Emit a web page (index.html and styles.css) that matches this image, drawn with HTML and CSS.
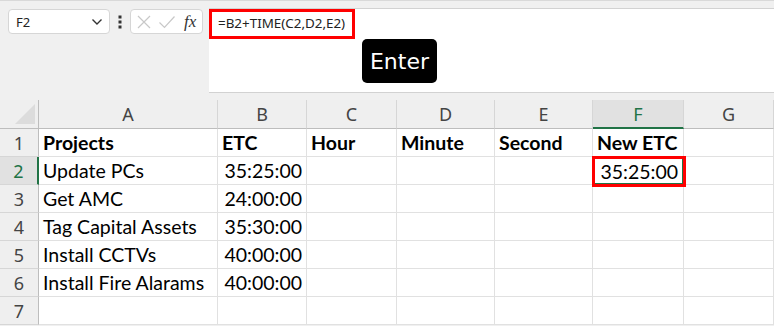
FILE: index.html
```html
<!DOCTYPE html>
<html lang="en">
<head>
    <meta charset="UTF-8">
    <meta name="viewport" content="width=device-width, initial-scale=1.0">
    <title>New ETC</title>
    <link rel="stylesheet" href="styles.css">
</head>
<body>
    <div class="topbar">
        <div class="namebox">
            <span>F2</span>
            <svg width="12" height="8" viewBox="0 0 12 8"><path d="M1.5 1.5 L6 6 L10.5 1.5" fill="none" stroke="#333" stroke-width="1.4"/></svg>
        </div>
        <div class="dots">
            <svg width="4" height="14" viewBox="0 0 4 14"><rect x="0.5" y="0.5" width="3" height="3" fill="#333"/><rect x="0.5" y="5.5" width="3" height="3" fill="#333"/><rect x="0.5" y="10.5" width="3" height="3" fill="#333"/></svg>
        </div>
        <div class="fnbox">
            <svg width="16" height="16" viewBox="0 0 16 16"><path d="M2 2 L14 14 M14 2 L2 14" stroke="#c8c8c8" stroke-width="1.2"/></svg>
            <svg width="18" height="16" viewBox="0 0 18 16"><path d="M1.5 8.5 L6.5 13.5 L16.5 2.5" fill="none" stroke="#c8c8c8" stroke-width="1.2"/></svg>
            <span class="fx">fx</span>
        </div>
        <div class="formula">
            <div class="formula-text">=B2+TIME(C2,D2,E2)</div>
            <div class="enter">Enter</div>
        </div>
    </div>

    <div class="sheet">
        <div class="corner"><span class="tri"></span></div>
        <div class="colhead">A</div>
        <div class="colhead">B</div>
        <div class="colhead">C</div>
        <div class="colhead">D</div>
        <div class="colhead">E</div>
        <div class="colhead selected">F</div>
        <div class="colhead">G</div>

        <div class="rowhead">1</div>
        <div class="cell bold">Projects</div>
        <div class="cell bold">ETC</div>
        <div class="cell bold">Hour</div>
        <div class="cell bold">Minute</div>
        <div class="cell bold">Second</div>
        <div class="cell bold">New ETC</div>
        <div class="cell"></div>

        <div class="rowhead selected">2</div>
        <div class="cell">Update PCs</div>
        <div class="cell num">35:25:00</div>
        <div class="cell"></div>
        <div class="cell"></div>
        <div class="cell"></div>
        <div class="cell num active">35:25:00</div>
        <div class="cell"></div>

        <div class="rowhead">3</div>
        <div class="cell">Get AMC</div>
        <div class="cell num">24:00:00</div>
        <div class="cell"></div>
        <div class="cell"></div>
        <div class="cell"></div>
        <div class="cell"></div>
        <div class="cell"></div>

        <div class="rowhead">4</div>
        <div class="cell">Tag Capital Assets</div>
        <div class="cell num">35:30:00</div>
        <div class="cell"></div>
        <div class="cell"></div>
        <div class="cell"></div>
        <div class="cell"></div>
        <div class="cell"></div>

        <div class="rowhead">5</div>
        <div class="cell">Install CCTVs</div>
        <div class="cell num">40:00:00</div>
        <div class="cell"></div>
        <div class="cell"></div>
        <div class="cell"></div>
        <div class="cell"></div>
        <div class="cell"></div>

        <div class="rowhead">6</div>
        <div class="cell">Install Fire Alarams</div>
        <div class="cell num">40:00:00</div>
        <div class="cell"></div>
        <div class="cell"></div>
        <div class="cell"></div>
        <div class="cell"></div>
        <div class="cell"></div>

        <div class="rowhead">7</div>
        <div class="cell"></div>
        <div class="cell"></div>
        <div class="cell"></div>
        <div class="cell"></div>
        <div class="cell"></div>
        <div class="cell"></div>
        <div class="cell"></div>
    </div>
</body>
</html>
```

FILE: styles.css
```css
body {
    margin: 0;
    background-color: #f0f0f0;
    font-family: "Noto Sans", sans-serif;
    overflow: hidden;
}
.topbar {
    height: 100px;
    box-sizing: border-box;
    padding-top: 8px;
    padding-left: 8px;
    display: flex;
    align-items: flex-start;
    border-top: 1px solid #d9d9d9;
}
.namebox {
    width: 102px;
    height: 25px;
    box-sizing: border-box;
    background: white;
    border: 1px solid #d6d6d6;
    border-radius: 4px;
    display: flex;
    align-items: center;
    justify-content: space-between;
    padding: 0 6px 0 7px;
    font-size: 13px;
    color: #222;
}
.dots {
    width: 20px;
    height: 25px;
    display: flex;
    align-items: center;
    justify-content: center;
}
.fnbox {
    width: 73px;
    height: 25px;
    box-sizing: border-box;
    background: white;
    border: 1px solid #d6d6d6;
    border-radius: 4px;
    display: flex;
    align-items: center;
    gap: 6px;
    padding-left: 5px;
}
.fx {
    font-family: "Liberation Serif", serif;
    font-style: italic;
    font-size: 17px;
    color: #333;
    margin-left: 2px;
}
.formula {
    flex: 1;
    margin-left: 6px;
    height: 85px;
    box-sizing: border-box;
    background: white;
    border-top: 1px solid #d2d2d2;
    border-bottom: 1px solid #d2d2d2;
    display: flex;
    flex-direction: column;
    align-items: flex-start;
    margin-top: -1px;
}
.formula-text {
    width: 146px;
    height: 30px;
    box-sizing: border-box;
    border: 3px solid #ff0000;
    padding-left: 6px;
    font-size: 13.4px;
    line-height: 23px;
    color: #222;
    white-space: nowrap;
}
.enter {
    margin-left: 153px;
    width: 75px;
    height: 44px;
    background: black;
    color: white;
    border-radius: 5px;
    font-family: "DejaVu Sans", sans-serif;
    font-size: 22px;
    display: flex;
    align-items: center;
    justify-content: center;
}
.sheet {
    display: grid;
    grid-template-columns: 39px 179px 89px 90px 98px 98px 91px 90px;
    grid-template-rows: 29px repeat(7, 28px);
    background: white;
}
.corner {
    background: #efefef;
    border-right: 1px solid #bdbdbd;
    border-bottom: 1px solid #bdbdbd;
    position: relative;
}
.tri {
    position: absolute;
    right: 3px;
    bottom: 4px;
    width: 0;
    height: 0;
    border-left: 20px solid transparent;
    border-bottom: 20px solid #dcdcdc;
}
.colhead {
    background: #efefef;
    border-right: 1px solid #d6d6d6;
    border-bottom: 1px solid #bdbdbd;
    display: flex;
    align-items: center;
    justify-content: center;
    font-size: 18px;
    color: #444;
}
.rowhead {
    background: #efefef;
    border-right: 1px solid #bdbdbd;
    border-bottom: 1px solid #d6d6d6;
    display: flex;
    align-items: center;
    justify-content: center;
    font-size: 18px;
    color: #444;
}
.colhead.selected {
    background: #e1e1e1;
    color: #217346;
    border-bottom: 2px solid #217346;
}
.rowhead.selected {
    background: #e1e1e1;
    color: #217346;
    border-right: 2px solid #217346;
}
.cell {
    border-right: 1px solid #e1e1e1;
    border-bottom: 1px solid #e1e1e1;
    font-family: "Lato", sans-serif;
    font-size: 19.5px;
    color: #000;
    padding: 0 4px;
    display: flex;
    align-items: center;
    white-space: nowrap;
}
.bold {
    font-weight: bold;
}
.num {
    justify-content: flex-end;
}
.active {
    position: relative;
    border: 2px solid #217346;
}
.active::after {
    content: "";
    position: absolute;
    left: -3px;
    top: -3px;
    right: -4px;
    bottom: -4px;
    border: 3px solid #ff0000;
}
```
